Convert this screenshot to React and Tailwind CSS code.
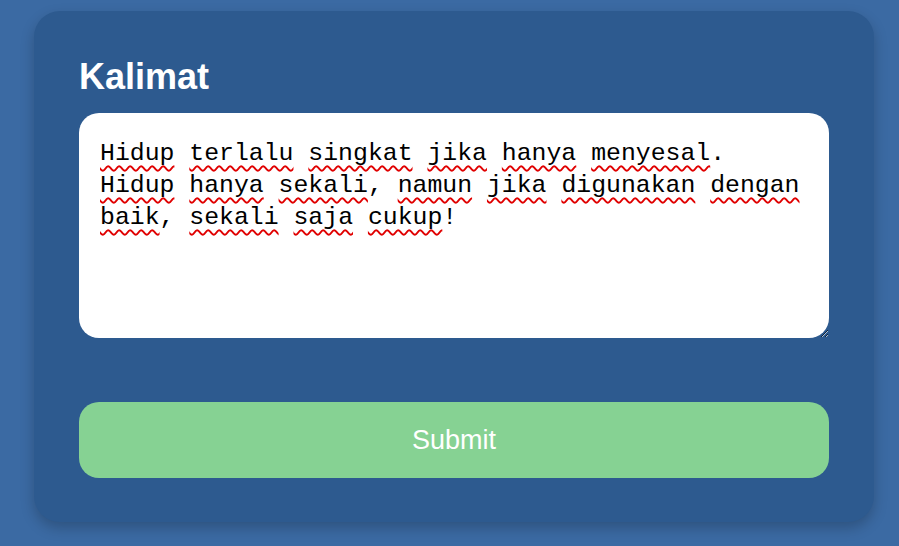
import { Fragment } from "react";

const lines = [
  [["Hidup", true], " ", ["terlalu", true], " ", ["singkat", true], " ", ["jika", true], " ", ["hanya", true], " ", ["menyesal", true], "."],
  [["Hidup", true], " ", ["hanya", true], " ", ["sekali", true], ", ", ["namun", true], " ", ["jika", true], " ", ["digunakan", true], " ", ["dengan", true]],
  [["baik", true], ", ", ["sekali", true], " ", ["saja", true], " ", ["cukup", true], "!"],
];

export default function App() {
  return (
    <div className="min-h-[546px] w-full bg-[#3b6aa3] pt-[11px] font-['Liberation_Sans',Arial,sans-serif]">
      <div className="ml-[34px] w-[840px] rounded-[26px] bg-[#2d5a8f] px-[45px] pb-[44px] pt-[46px] shadow-[0_6px_14px_rgba(0,0,0,0.22)]">
        <h1 className="text-[36px] font-bold leading-[40px] text-white">Kalimat</h1>
        <div
          role="textbox"
          className="mt-4 h-[225px] resize overflow-auto rounded-[20px] bg-white px-[21px] pt-[24px] font-['Liberation_Mono',monospace] text-[24.8px] leading-8 text-black"
        >
          {lines.map((parts, i) => (
            <div key={i} className="whitespace-pre">
              {parts.map((p, j) =>
                typeof p === "string" ? (
                  <Fragment key={j}>{p}</Fragment>
                ) : (
                  <span
                    key={j}
                    className="underline decoration-[#e00000] decoration-wavy decoration-[1.5px] underline-offset-[5px]"
                  >
                    {p[0]}
                  </span>
                )
              )}
            </div>
          ))}
        </div>
        <button
          type="button"
          className="mt-16 h-[76px] w-full rounded-[20px] bg-[#86d293] text-[27px] text-white"
        >
          Submit
        </button>
      </div>
    </div>
  );
}
